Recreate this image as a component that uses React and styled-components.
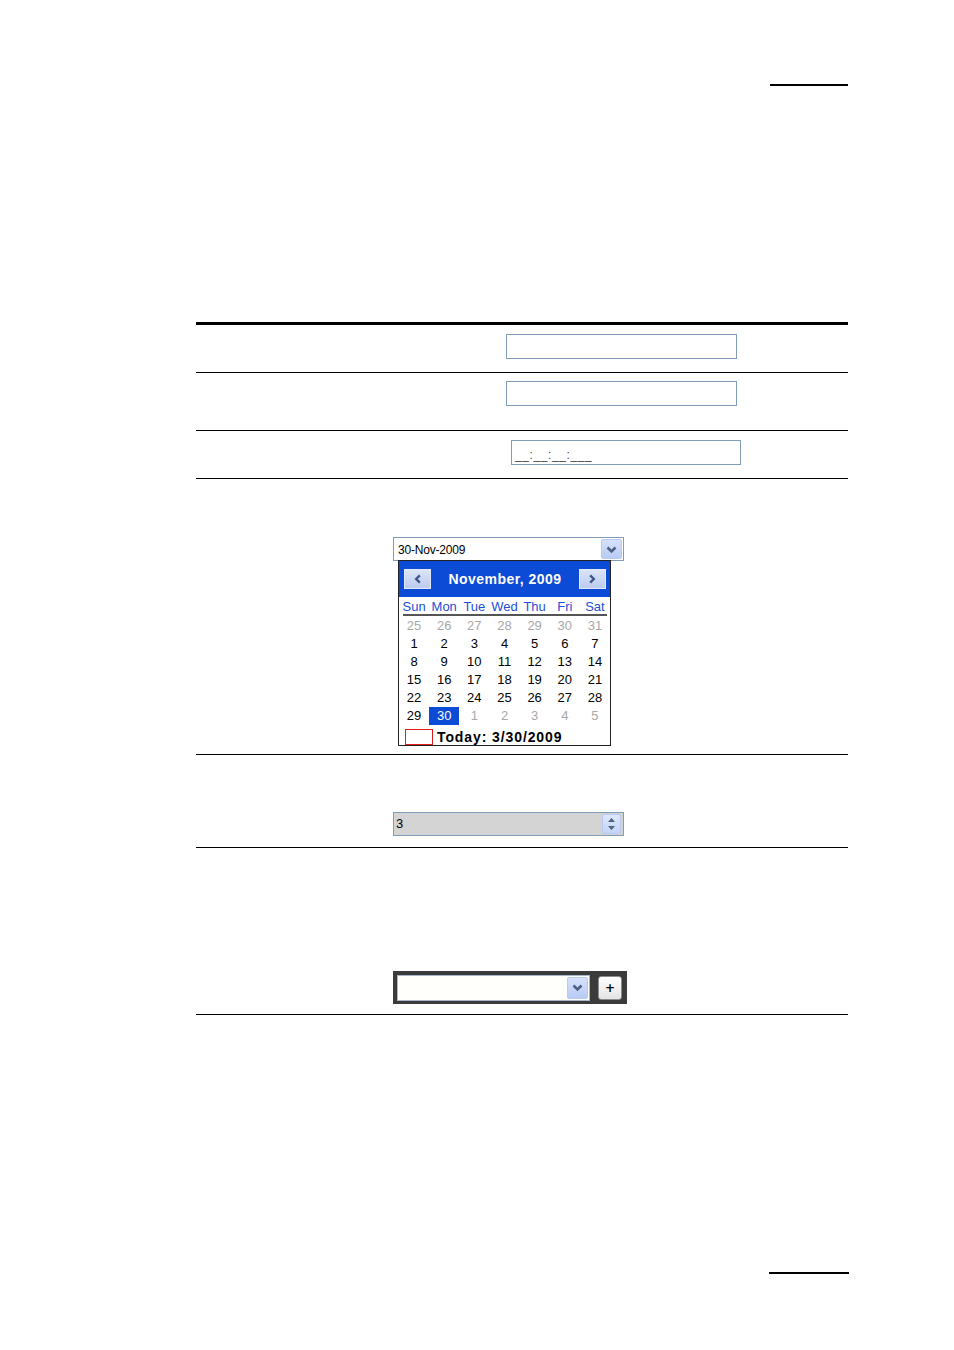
import React from 'react'
import styled, { createGlobalStyle } from 'styled-components'

const GlobalStyle = createGlobalStyle`
    body {
        margin: 0;
        background: #fff;
        font-family: "Liberation Sans", Arial, sans-serif;
    }
`;

const Page = styled.div`
    width: 954px;
    height: 1350px;
    background: #fff;
    overflow: hidden;
`;

const RuleRow = styled.div`
    display: flex;
    justify-content: flex-end;
    padding-right: ${p => p.right}px;
    margin-top: ${p => p.top}px;
`;

const ShortRule = styled.div`
    width: ${p => p.width}px;
    height: 2px;
    background: #000;
`;

const Table = styled.div`
    margin: 236px 0 0 196px;
    width: 652px;
    border-top: 3px solid #000;
`;

const Row = styled.div`
    box-sizing: border-box;
    height: ${p => p.h}px;
    padding-top: ${p => p.pt}px;
    padding-left: ${p => p.pl}px;
    border-bottom: 1px solid #000;
`;

const TextBox = styled.div`
    box-sizing: border-box;
    width: ${p => p.w || 231}px;
    height: 25px;
    border: 1px solid #7f9db9;
    background: #fff;
    display: flex;
    align-items: flex-end;
    padding: 0 0 3px 3px;
`;

const MaskText = styled.span`
    font-size: 12px;
    color: #444;
    letter-spacing: 0.6px;
    line-height: 12px;
`;

const Combo = styled.div`
    box-sizing: border-box;
    width: 231px;
    height: 24px;
    border: 1px solid #7f9db9;
    background: ${p => p.bg || '#fff'};
    display: flex;
    align-items: center;
    padding: 0 1px 0 4px;
`;

const ComboText = styled.span`
    flex: 1;
    font-size: 12px;
    color: #000;
    letter-spacing: -0.2px;
    margin-top: 2px;
`;

const DropButton = styled.div`
    box-sizing: border-box;
    width: ${p => p.w || 21}px;
    height: ${p => p.h || 20}px;
    border: 1px solid #b9c9ef;
    border-radius: 2px;
    background: linear-gradient(#d6e1fb, #b8cbf5);
    display: flex;
    align-items: center;
    justify-content: center;
`;

const Popup = styled.div`
    box-sizing: border-box;
    width: 213px;
    height: 186px;
    margin: -1px 0 0 5px;
    border: 1px solid #222;
    background: #fff;
`;

const CalHeader = styled.div`
    height: 36px;
    background: #0c4bd6;
    display: flex;
    align-items: center;
    justify-content: space-between;
    padding: 0 4px 0 5px;
`;

const NavButton = styled.div`
    box-sizing: border-box;
    width: 27px;
    height: 20px;
    border: 1px solid #e2e9fb;
    background: linear-gradient(#dbe4f8, #bccbef);
    display: flex;
    align-items: center;
    justify-content: center;
`;

const CalTitle = styled.span`
    color: #fff;
    font-weight: bold;
    font-size: 14px;
    letter-spacing: 0.45px;
`;

const Grid = styled.div`
    display: grid;
    grid-template-columns: repeat(7, 1fr);
`;

const DayName = styled.div`
    height: 17px;
    line-height: 19px;
    text-align: center;
    font-size: 13px;
    color: #1c4fd8;
`;

const Underline = styled.div`
    height: 2px;
    background: #555;
    margin: 0 3px 1px 4px;
`;

const Day = styled.div`
    height: 18px;
    line-height: 18px;
    text-align: center;
    font-size: 13px;
    color: ${p => (p.selected ? '#fff' : p.muted ? '#a8a8a8' : '#000')};
    background: ${p => (p.selected ? '#0c4bd6' : 'transparent')};
`;

const TodayRow = styled.div`
    display: flex;
    align-items: center;
    height: 20px;
    padding-left: 6px;
`;

const TodayBox = styled.div`
    box-sizing: border-box;
    width: 28px;
    height: 16px;
    border: 1px solid #e21b1b;
    margin: 3px 4px 0 0;
`;

const TodayText = styled.span`
    font-weight: bold;
    font-size: 14px;
    letter-spacing: 0.9px;
    padding-top: 4px;
`;

const SpinText = styled.span`
    flex: 1;
    font-size: 13px;
    color: #000;
    margin-left: -2px;
    margin-top: -2px;
`;

const SpinButtons = styled.div`
    box-sizing: border-box;
    width: 19px;
    height: 20px;
    margin-right: 1px;
    border: 1px solid #b9c9ef;
    border-radius: 2px;
    background: linear-gradient(#dfe8fb, #c4d4f6);
    display: flex;
    flex-direction: column;
    align-items: center;
    justify-content: space-around;
`;

const DarkFrame = styled.div`
    box-sizing: border-box;
    width: 234px;
    height: 33px;
    background: #3b3b3b;
    display: flex;
    align-items: center;
    padding: 0 5px 0 4px;
    gap: 8px;
`;

const InnerCombo = styled.div`
    box-sizing: border-box;
    width: 194px;
    height: 26px;
    border: 1px solid #aab4c8;
    background: #fffffb;
    display: flex;
    align-items: center;
    justify-content: flex-end;
    padding-right: 1px;
`;

const PlusButton = styled.div`
    box-sizing: border-box;
    width: 24px;
    height: 24px;
    border: 1px solid #8d8d8d;
    border-radius: 3px;
    background: linear-gradient(#ffffff, #e4e4e4);
    display: flex;
    align-items: center;
    justify-content: center;
    font-size: 12px;
    font-weight: bold;
    color: #000;
    font-family: "DejaVu Sans", sans-serif;
`;

const Chevron = ({ dir = 'down', color = '#4d6185', size = 11 }) => {
    const paths = {
        down: 'M1.5 3.5 L5.5 7.5 L9.5 3.5',
        up: 'M1.5 7.5 L5.5 3.5 L9.5 7.5',
        left: 'M7.5 1.5 L3.5 5.5 L7.5 9.5',
        right: 'M3.5 1.5 L7.5 5.5 L3.5 9.5',
    };
    return (
        <svg width={size} height={size} viewBox="0 0 11 11">
            <path d={paths[dir]} fill="none" stroke={color} strokeWidth="2.6" />
        </svg>
    );
};

const Triangle = ({ up }) => (
    <svg width="9" height="5" viewBox="0 0 9 5">
        <path d={up ? 'M1 5 L4.5 1 L8 5 Z' : 'M1 0 L4.5 4 L8 0 Z'} fill="#4d6185" />
    </svg>
);

const dayNames = ['Sun', 'Mon', 'Tue', 'Wed', 'Thu', 'Fri', 'Sat'];

const weeks = [
    [[25, 1], [26, 1], [27, 1], [28, 1], [29, 1], [30, 1], [31, 1]],
    [[1], [2], [3], [4], [5], [6], [7]],
    [[8], [9], [10], [11], [12], [13], [14]],
    [[15], [16], [17], [18], [19], [20], [21]],
    [[22], [23], [24], [25], [26], [27], [28]],
    [[29], [30, 0, 1], [1, 1], [2, 1], [3, 1], [4, 1], [5, 1]],
];

function Calendar() {
    return (
        <Popup>
            <CalHeader>
                <NavButton><Chevron dir="left" color="#3f5787" size={10} /></NavButton>
                <CalTitle>November, 2009</CalTitle>
                <NavButton><Chevron dir="right" color="#3f5787" size={10} /></NavButton>
            </CalHeader>
            <Grid>
                {dayNames.map(n => <DayName key={n}>{n}</DayName>)}
            </Grid>
            <Underline />
            <Grid>
                {weeks.flat().map(([d, muted, selected], i) => (
                    <Day key={i} muted={!!muted} selected={!!selected}>{d}</Day>
                ))}
            </Grid>
            <TodayRow>
                <TodayBox />
                <TodayText>Today: 3/30/2009</TodayText>
            </TodayRow>
        </Popup>
    );
}

export default function App() {
    return (
        <Page>
            <GlobalStyle />
            <RuleRow top={84} right={106}>
                <ShortRule width={78} />
            </RuleRow>
            <Table>
                <Row h={48} pt={9} pl={310}>
                    <TextBox />
                </Row>
                <Row h={58} pt={8} pl={310}>
                    <TextBox />
                </Row>
                <Row h={48} pt={9} pl={315}>
                    <TextBox w={230}>
                        <MaskText>__:__:__:___</MaskText>
                    </TextBox>
                </Row>
                <Row h={276} pt={58} pl={197}>
                    <Combo>
                        <ComboText>30-Nov-2009</ComboText>
                        <DropButton><Chevron /></DropButton>
                    </Combo>
                    <Calendar />
                </Row>
                <Row h={93} pt={57} pl={197}>
                    <Combo bg="#d4d4d4">
                        <SpinText>3</SpinText>
                        <SpinButtons>
                            <Triangle up />
                            <Triangle />
                        </SpinButtons>
                    </Combo>
                </Row>
                <Row h={167} pt={123} pl={197}>
                    <DarkFrame>
                        <InnerCombo>
                            <DropButton w={21} h={22}><Chevron /></DropButton>
                        </InnerCombo>
                        <PlusButton>+</PlusButton>
                    </DarkFrame>
                </Row>
            </Table>
            <RuleRow top={257} right={105}>
                <ShortRule width={80} />
            </RuleRow>
        </Page>
    );
}
